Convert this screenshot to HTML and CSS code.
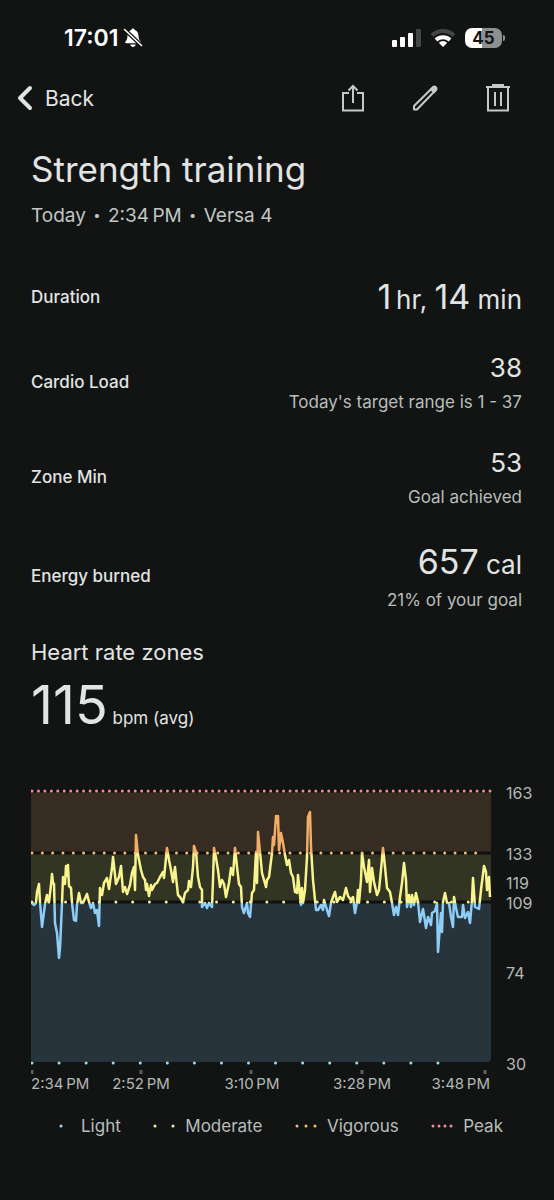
FILE: index.html
```html
<!DOCTYPE html>
<html lang="en">
<head>
  <meta charset="UTF-8" />
  <meta name="viewport" content="width=device-width, initial-scale=1.0" />
  <title>Strength training</title>
  <link rel="stylesheet" href="styles.css">
</head>
<body>
  <div class="status-bar">
    <div class="status-left">
      <span class="clock">17:01</span>
      <svg class="bell" viewBox="0 0 20 20" width="20" height="20">
        <path fill="#fff" d="M10 0.5c.9 0 1.5.6 1.6 1.4 2.5.8 3.8 2.8 3.9 5.6.1 3.500.8 4.800 2 6 .6.700.2 1.800-.8 1.800H3.300c-1 0-1.400-1.100-.8-1.800 1.200-1.200 1.900-2.500 2-6 .1-2.800 1.400-4.800 3.900-5.600C8.500 1.100 9.100.5 10 .5zM7.300 16.500h5.400c-.3 1.600-1.300 2.500-2.700 2.500s-2.400-.9-2.700-2.500z"/>
        <path stroke="#111413" stroke-width="4" d="M1 1l18 17"/>
        <path stroke="#fff" stroke-width="1.6" stroke-linecap="round" d="M1.500 1.500l17 16"/>
      </svg>
    </div>
    <div class="status-right">
      <svg viewBox="0 0 29 18" width="29" height="18">
        <rect x="0" y="11" width="5" height="7" rx="1" fill="#fff"/>
        <rect x="8" y="8" width="5" height="10" rx="1" fill="#fff"/>
        <rect x="16" y="4" width="5" height="14" rx="1" fill="#fff"/>
        <rect x="24" y="0" width="5" height="18" rx="1" fill="#434645"/>
      </svg>
      <svg viewBox="0 0 26 18" width="26" height="18" fill="none" stroke-width="4">
        <path stroke="#434645" d="M2 6.500a16 16 0 0 1 22 0"/>
        <path stroke="#fff" d="M6 11a10.500 10.500 0 0 1 14 0"/>
        <path fill="#fff" d="M13 18l-4.200-4.300a6.300 6.300 0 0 1 8.400 0z"/>
      </svg>
      <div class="battery">45</div>
    </div>
  </div>

  <header class="toolbar">
    <button class="back-btn">
      <svg viewBox="0 0 16 26" width="16" height="26"><path d="M13 3L3 13l10 10" fill="none" stroke="#e2e4e3" stroke-width="4" stroke-linecap="round" stroke-linejoin="round"/></svg>
      Back
    </button>
    <div class="actions">
      <button aria-label="Share">
        <svg viewBox="0 0 24 30" width="24" height="30"><path d="M8 10H2v17.500h20V10h-6M12 20V3M7.500 7.500L12 3l4.500 4.500"/></svg>
      </button>
      <button aria-label="Edit">
        <svg viewBox="0 0 28 28" width="28" height="28"><path d="M3 25.500v-3.500L22 3.200c2-1.700 4.500.8 2.800 2.800L6 25.500z" stroke-linejoin="round"/><path d="M20 5.200l3 3 2-2c1-1.500-1.200-3.700-2.800-3z" fill="#c5c9c7"/></svg>
      </button>
      <button aria-label="Delete">
        <svg viewBox="0 0 26 30" width="26" height="30"><path d="M1 4h24M8 3V2h10v1M3 4v23.500h20V4M10 9v14M16 9v14"/></svg>
      </button>
    </div>
  </header>

  <main>
    <h1>Strength training</h1>
    <p class="subtitle">Today <span class="bullet">•</span> 2:34&#8201;PM <span class="bullet">•</span> Versa 4</p>

    <dl class="stats">
      <div class="stat">
        <dt>Duration</dt>
        <dd class="value big">1<span class="unit">&#8201;hr, </span>14<span class="unit"> min</span></dd>
      </div>
      <div class="stat">
        <dt>Cardio Load</dt>
        <dd class="value">38</dd>
        <dd class="note">Today's target range is 1 - 37</dd>
      </div>
      <div class="stat">
        <dt>Zone Min</dt>
        <dd class="value">53</dd>
        <dd class="note">Goal achieved</dd>
      </div>
      <div class="stat">
        <dt>Energy burned</dt>
        <dd class="value big">657<span class="unit"> cal</span></dd>
        <dd class="note">21% of your goal</dd>
      </div>
    </dl>

    <h2>Heart rate zones</h2>
    <p class="average"><strong>115</strong> bpm (avg)</p>
  </main>

  <svg class="chart" viewBox="0 -8 504 312" role="img" aria-label="Heart rate by zone">
    <defs>
      <!-- line colour switches at the zone limits -->
      <linearGradient id="zones" gradientUnits="userSpaceOnUse" x1="0" y1="0" x2="0" y2="271">
        <stop offset="0.23" stop-color="#f2ae67"/>
        <stop offset="0.23" stop-color="#f8f58e"/>
        <stop offset="0.415" stop-color="#f8f58e"/>
        <stop offset="0.415" stop-color="#8dcdf8"/>
      </linearGradient>
    </defs>

    <rect class="vigorous-zone" width="460" height="62"/>
    <rect class="moderate-zone" y="62" width="460" height="49"/>
    <path class="light-zone" d="M0 111H460V267a4 4 0 0 1-4 4H4a4 4 0 0 1-4-4z"/>
    <path class="limit" d="M0 0H460M0 62H460M0 111H460"/>

    <polyline class="rate" stroke-width="2.5" points="0,111 1,112 3,114 5,112 6,101 8,93 9,111 11,136 13,121 14,113 16,104 18,111 20,94 21,83 22,92 23,93 24,132 26,142 28,167 29,157 31,112 32,86 34,93 35,75 36,85 37,74 38,95 40,97 41,112 43,129 45,130 46,114 48,102 50,112 52,112 56,103 58,111 60,117 62,112 64,122 66,119 68,135 69,97 71,104 73,92 76,87 78,98 81,77 82,66 85,93 88,86 90,75 92,101 94,96 96,103 99,94 101,82 103,76 104,99 105,44 107,64 110,79 112,86 114,89 115,99 116,93 118,105 120,94 121,99 124,93 126,92 129,86 132,81 133,87 136,57 138,69 140,79 142,91 144,76 145,86 147,104 149,106 152,111 154,102 157,99 158,90 160,96 162,76 163,55 165,61 167,86 169,96 171,99 171,116 174,112 176,117 178,112 181,116 182,89 183,57 185,67 187,79 189,96 191,89 193,93 195,106 198,92 200,77 202,84 204,57 206,76 208,93 210,96 211,116 213,122 216,112 217,122 219,126 221,102 223,99 225,61 226,92 227,41 229,61 231,82 235,96 236,89 238,86 241,62 242,46 243,54 245,25 246,32 247,25 248,59 250,42 252,52 254,64 256,74 258,69 260,82 262,86 264,101 266,102 267,84 270,114 271,97 272,112 274,99 276,66 277,26 279,21 280,56 282,89 283,99 285,119 287,119 290,114 292,119 293,109 296,119 298,125 300,112 302,106 304,101 306,111 309,106 312,109 315,97 317,105 320,109 322,106 324,122 326,111 327,99 328,112 330,89 331,62 333,76 336,91 338,69 339,101 341,77 343,91 346,104 348,99 350,79 352,57 354,76 356,97 359,101 361,112 363,124 365,116 367,124 369,106 371,92 373,72 375,89 376,116 378,104 380,116 381,104 383,114 385,102 387,111 389,131 392,118 393,124 395,137 397,126 400,134 401,122 404,120 406,112 407,161 410,122 411,141 412,111 414,102 416,112 418,112 420,126 422,136 423,106 425,117 427,126 431,126 432,114 434,127 437,121 439,132 441,109 442,87 444,116 448,118 450,99 453,75 455,81 456,99 458,86 459,106"/>

    <path class="dots peak" pathLength="142" stroke-dasharray="0 2" d="M1 0H459"/>
    <path class="dots vigorous" pathLength="88" stroke-dasharray="0 2" d="M1 62H455"/>
    <path class="dots moderate" pathLength="54" stroke-dasharray="0 2" d="M1 111H454"/>
    <path class="dots light" pathLength="32" stroke-dasharray="0 2" d="M1 272H434"/>
    <path class="ticks" d="M1 279v4M110 279v4M220 279v4M331 279v4M454 279v4"/>

    <g class="axis">
      <text x="475" y="8">163</text>
      <text x="475" y="69">133</text>
      <text x="475" y="98">119</text>
      <text x="475" y="118">109</text>
      <text x="475" y="188">74</text>
      <text x="475" y="279">30</text>
    </g>
    <g class="axis time">
      <text x="0" y="298">2:34&#8201;PM</text>
      <text x="110" y="298" text-anchor="middle">2:52&#8201;PM</text>
      <text x="221" y="298" text-anchor="middle">3:10&#8201;PM</text>
      <text x="331" y="298" text-anchor="middle">3:28&#8201;PM</text>
      <text x="459" y="298" text-anchor="end">3:48&#8201;PM</text>
    </g>
  </svg>

  <ul class="legend">
    <li><svg viewBox="0 0 12 4" width="12" height="4"><path class="dots light" d="M2 2h0"/></svg>Light</li>
    <li><svg viewBox="0 0 22 4" width="22" height="4"><path class="dots moderate" d="M2 2h0M20 2h0"/></svg>Moderate</li>
    <li><svg viewBox="0 0 22 4" width="22" height="4"><path class="dots vigorous" d="M2 2h0M11 2h0M20 2h0"/></svg>Vigorous</li>
    <li><svg viewBox="0 0 22 4" width="22" height="4"><path class="dots peak" d="M2 2h0M8 2h0M14 2h0M20 2h0"/></svg>Peak</li>
  </ul>
</body>
</html>
```
FILE: styles.css
```css
* {
  box-sizing: border-box;
}
body {
  margin: 0;
  padding-bottom: 60px;
  background: #111413;
  color: #e2e4e3;
  font-family: Inter, 'Liberation Sans', sans-serif;
}
h1, h2, p, dl, dd, ul {
  margin: 0;
  padding: 0;
  font-weight: 400;
}
svg {
  flex: none;
}
button {
  display: flex;
  align-items: center;
  padding: 0;
  border: none;
  background: none;
  color: inherit;
  font: inherit;
  cursor: pointer;
}

.status-bar {
  display: flex;
  justify-content: space-between;
  align-items: center;
  height: 76px;
  padding: 0 52px 0 64px;
  color: #fff;
}
.status-left, .status-right {
  display: flex;
  align-items: center;
}
.status-left {
  gap: 5px;
}
.status-right {
  gap: 9px;
}
.clock {
  font-size: 23px;
  font-weight: 600;
}
.battery {
  position: relative;
  width: 37px;
  height: 20px;
  border-radius: 7px;
  background: linear-gradient(to right, #fff 45%, #8e908f 45%);
  color: #111413;
  font-size: 17px;
  font-weight: 700;
  line-height: 20px;
  text-align: center;
}
.battery::after {
  content: '';
  position: absolute;
  top: 7px;
  right: -3px;
  width: 2px;
  height: 6px;
  border-radius: 0 2px 2px 0;
  background: #8e908f;
}

.toolbar {
  display: flex;
  justify-content: space-between;
  align-items: center;
  height: 44px;
  padding: 0 43px 0 17px;
}
.back-btn {
  gap: 12px;
  font-size: 21px;
}
.actions {
  display: flex;
  align-items: center;
  gap: 46px;
}
.actions svg {
  fill: none;
  stroke: #c5c9c7;
  stroke-width: 2;
}

main {
  padding: 27px 32px 0 31px;
}
h1 {
  font-size: 35px;
  line-height: 44px;
}
.subtitle {
  margin: 12px 0 46px;
  color: #c2c6c4;
  font-size: 19px;
  line-height: 26px;
}
.bullet {
  padding: 0 2px;
  font-size: 13px;
  line-height: 1;
  vertical-align: 2px;
}
.stats {
  display: grid;
  gap: 31px;
}
.stat {
  display: grid;
  grid-template-columns: auto 1fr;
  row-gap: 4px;
  align-items: center;
  text-align: right;
}
.stat dt {
  grid-row: 1 / span 2;
  font-size: 17px;
  font-weight: 500;
}
.stat dt:nth-last-child(2) {
  grid-row: 1;
}
.stat dd {
  grid-column: 2;
}
.value {
  font-size: 26px;
  line-height: 36px;
}
.value.big {
  font-size: 34px;
  line-height: 44px;
}
.unit {
  font-size: 26px;
  line-height: 1;
}
.note {
  color: #b9bdbb;
  font-size: 17px;
  line-height: 24px;
}
h2 {
  margin-top: 26px;
  font-size: 22px;
  line-height: 28px;
}
.average {
  margin-top: 7px;
  font-size: 17px;
  line-height: 64px;
}
.average strong {
  font-size: 54px;
  font-weight: 400;
}

.chart {
  display: block;
  width: calc(100% - 50px);
  margin: 33px 19px 0 31px;
}
.vigorous-zone {
  fill: #362c22;
}
.moderate-zone {
  fill: #333524;
}
.light-zone {
  fill: #27343b;
}
.limit {
  stroke: #111110;
  stroke-width: 3;
}
.rate {
  fill: none;
  stroke: url(#zones);
  stroke-linejoin: round;
}
.dots {
  fill: none;
  stroke-width: 3;
  stroke-linecap: round;
}
.light {
  stroke: #9fd9ee;
}
.moderate {
  stroke: #f4f0a0;
}
.vigorous {
  stroke: #f3bd78;
}
.peak {
  stroke: #f28b95;
}
.ticks {
  stroke: #5b5e5d;
  stroke-width: 3;
}
.axis {
  fill: #b4b8b6;
  font-size: 16px;
}
.time {
  font-size: 15px;
}

.legend {
  display: flex;
  justify-content: space-between;
  margin-top: 18px;
  padding: 0 51px 0 59px;
  color: #b9bdbb;
  font-size: 17px;
  line-height: 26px;
  list-style: none;
}
.legend li {
  display: flex;
  align-items: center;
  gap: 10px;
}
```
